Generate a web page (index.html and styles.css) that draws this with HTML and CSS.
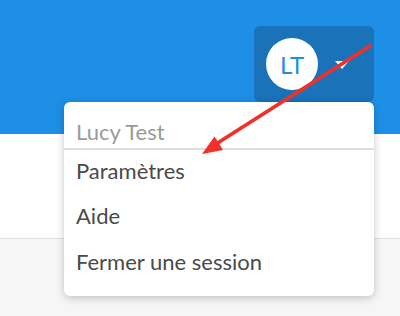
FILE: index.html
```html
<!DOCTYPE html>
<html lang="fr">
<head>
<meta charset="utf-8">
<link rel="stylesheet" href="styles.css">
</head>
<body>
<header class="topbar">
  <div class="user-btn">
    <div class="avatar">LT</div>
    <svg class="chevron" width="14" height="8" viewBox="0 0 14 8"><polygon points="0,0 14,0 7,8" fill="#fff"/></svg>
  </div>
</header>
<main class="content"></main>
<div class="footer-area"></div>

<div class="menu">
  <div class="menu-name">Lucy Test</div>
  <div class="menu-item">Paramètres</div>
  <div class="menu-item">Aide</div>
  <div class="menu-item">Fermer une session</div>
</div>

<svg class="annotation" width="400" height="316" viewBox="0 0 400 316">
  <line x1="370" y1="46" x2="216" y2="144" stroke="#f2302a" stroke-width="3.8" stroke-linecap="round"/>
  <polygon points="202,154 214.5,136.5 223.1,149.9" fill="#f2302a"/>
</svg>
</body>
</html>
```
FILE: styles.css
```css
html, body {
  margin: 0;
  padding: 0;
  width: 400px;
  height: 316px;
  overflow: hidden;
  font-family: Lato, "Open Sans", sans-serif;
  background: #f6f6f6;
  position: relative;
}
.topbar {
  height: 134px;
  background: #1e8fe6;
  display: flex;
  justify-content: flex-end;
  align-items: flex-start;
  padding: 26px 26px 0 0;
  box-sizing: border-box;
}
.user-btn {
  width: 120px;
  height: 76px;
  background: #1a72b9;
  border-radius: 6px;
  display: flex;
  align-items: center;
  padding: 0 12px;
  box-sizing: border-box;
}
.avatar {
  width: 52px;
  height: 52px;
  border-radius: 50%;
  background: #fff;
  color: #1e8fe6;
  font-size: 24px;
  display: flex;
  align-items: center;
  justify-content: center;
}
.chevron {
  margin-left: 17px;
  margin-top: 2px;
}
.content {
  height: 104px;
  background: #fff;
  border-bottom: 1px solid #e1e1e1;
}
.menu {
  position: absolute;
  top: 102px;
  left: 64px;
  width: 310px;
  background: #fff;
  border-radius: 6px;
  box-shadow: 0 2px 8px rgba(0,0,0,0.22);
  padding: 16.5px 0 9.5px;
  box-sizing: border-box;
}
.menu-name {
  font-size: 22px;
  line-height: 26px;
  color: #9a9a9a;
  padding: 0 12px 3.5px;
  border-bottom: 2px solid #dedede;
}
.menu-item {
  font-size: 22px;
  line-height: 26px;
  color: #4a4a4a;
  padding: 7.5px 12px 12px;
}
.annotation {
  position: absolute;
  top: 0;
  left: 0;
}
```
